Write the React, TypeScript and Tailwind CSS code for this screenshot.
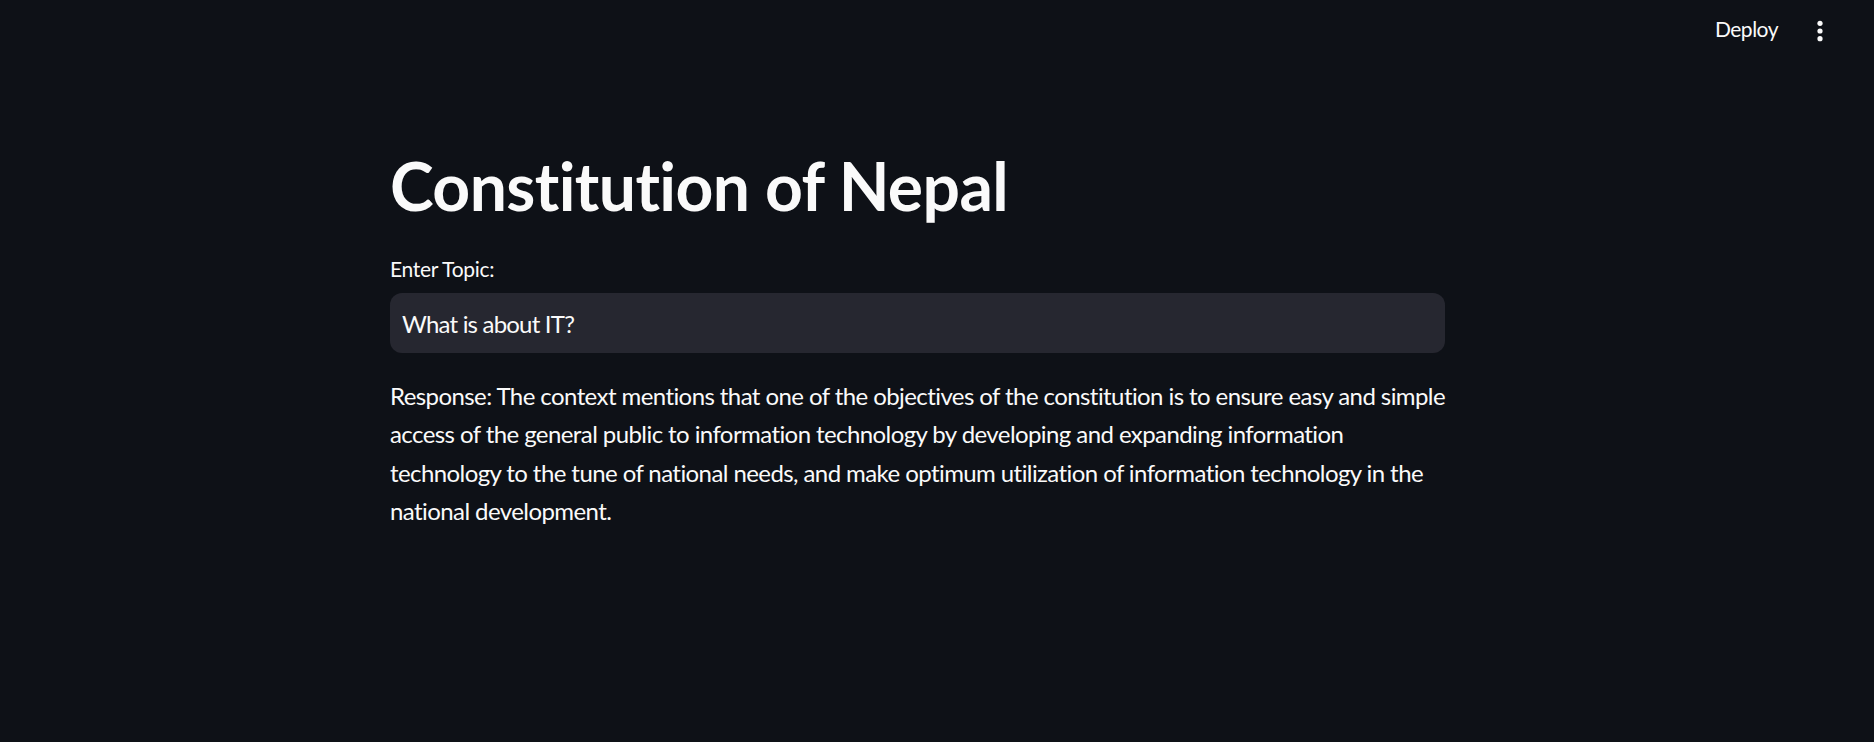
export default function App() {
  const lines = [
    'Response: The context mentions that one of the objectives of the constitution is to ensure easy and simple',
    'access of the general public to information technology by developing and expanding information',
    'technology to the tune of national needs, and make optimum utilization of information technology in the',
    'national development.',
  ];

  return (
    <div className="min-h-screen bg-[#0e1117] text-[#fafafa] font-['Lato','Noto_Sans',sans-serif] [font-variant-ligatures:none]">
      <header className="flex h-[58px] items-center justify-end">
        <span className="text-[21px] leading-[28px] tracking-[-0.5px]">Deploy</span>
        <svg width="6" height="24" viewBox="0 0 6 24" className="ml-[39px] mr-[51px] mt-[3px]">
          <circle cx="3" cy="4.3" r="2.6" fill="#fafafa" />
          <circle cx="3" cy="12" r="2.6" fill="#fafafa" />
          <circle cx="3" cy="19.7" r="2.6" fill="#fafafa" />
        </svg>
      </header>

      <main className="ml-[390px] w-[1055px]">
        <h1 className="mt-[88px] text-[66px] font-bold leading-[79px] tracking-[-0.6px]">Constitution of Nepal</h1>

        <label className="mt-[30px] block text-[21px] leading-[28px] tracking-[-0.3px]">Enter Topic:</label>
        <div className="mt-[10px] flex h-[60px] items-center rounded-[12px] bg-[#262730] px-[12px]">
          <span className="text-[24px] leading-[29px] tracking-[-0.8px]">What is about IT?</span>
        </div>

        <div className="mt-[24px] text-[24px] leading-[38.4px] tracking-[-0.58px]">
          {lines.map((line) => (
            <div key={line} className="whitespace-nowrap">{line}</div>
          ))}
        </div>
      </main>
    </div>
  );
}
